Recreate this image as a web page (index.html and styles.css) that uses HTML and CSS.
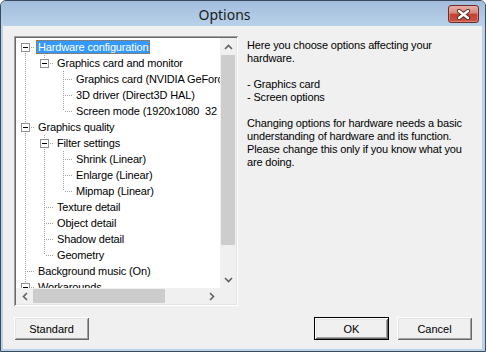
FILE: index.html
```html
<!DOCTYPE html>
<html lang="en">
<head>
  <meta charset="UTF-8" />
  <title>Options</title>
  <link rel="stylesheet" href="styles.css">
</head>
<body>
<div class="window">
  <div class="titlebar">
    <div class="title">Options</div>
    <div class="close">
      <svg width="15" height="11" viewBox="0 0 15 11">
        <path d="M3 2 L12 9 M12 2 L3 9" stroke="#5a2a25" stroke-width="4.2" stroke-linecap="round" fill="none"/>
        <path d="M3 2 L12 9 M12 2 L3 9" stroke="#fff" stroke-width="2.4" stroke-linecap="round" fill="none"/>
      </svg>
    </div>
  </div>

  <div class="client">
    <div class="main">
      <div class="tree">
        <div class="tree-view">
          <div class="row"><span class="ind first"><i class="exp"></i></span><span class="label selected">Hardware configuration</span></div>
          <div class="row"><span class="ind pipe"></span><span class="ind elbow"><i class="exp"></i></span><span class="label">Graphics card and monitor</span></div>
          <div class="row"><span class="ind pipe"></span><span class="ind"></span><span class="ind tee"></span><span class="label">Graphics card (NVIDIA GeForce GTX 1070)</span></div>
          <div class="row"><span class="ind pipe"></span><span class="ind"></span><span class="ind tee"></span><span class="label">3D driver (Direct3D HAL)</span></div>
          <div class="row"><span class="ind pipe"></span><span class="ind"></span><span class="ind elbow"></span><span class="label">Screen mode (1920x1080  32 Bit)</span></div>
          <div class="row"><span class="ind tee"><i class="exp"></i></span><span class="label">Graphics quality</span></div>
          <div class="row"><span class="ind pipe"></span><span class="ind tee"><i class="exp"></i></span><span class="label">Filter settings</span></div>
          <div class="row"><span class="ind pipe"></span><span class="ind pipe"></span><span class="ind tee"></span><span class="label">Shrink (Linear)</span></div>
          <div class="row"><span class="ind pipe"></span><span class="ind pipe"></span><span class="ind tee"></span><span class="label">Enlarge (Linear)</span></div>
          <div class="row"><span class="ind pipe"></span><span class="ind pipe"></span><span class="ind elbow"></span><span class="label">Mipmap (Linear)</span></div>
          <div class="row"><span class="ind pipe"></span><span class="ind tee"></span><span class="label">Texture detail</span></div>
          <div class="row"><span class="ind pipe"></span><span class="ind tee"></span><span class="label">Object detail</span></div>
          <div class="row"><span class="ind pipe"></span><span class="ind tee"></span><span class="label">Shadow detail</span></div>
          <div class="row"><span class="ind pipe"></span><span class="ind elbow"></span><span class="label">Geometry</span></div>
          <div class="row"><span class="ind tee"></span><span class="label">Background music (On)</span></div>
          <div class="row"><span class="ind tee"><i class="exp"></i></span><span class="label">Workarounds</span></div>
          <div class="row"><span class="ind tee"></span><span class="label">Network</span></div>
        </div>
        <div class="vscroll">
          <div class="arrow">
            <svg width="9" height="6" viewBox="0 0 9 6"><path d="M1 5 L4.5 1.5 L8 5" stroke="#606060" stroke-width="1.6" fill="none"/></svg>
          </div>
          <div class="vthumb"></div>
          <div class="track"></div>
          <div class="arrow">
            <svg width="9" height="6" viewBox="0 0 9 6"><path d="M1 1 L4.5 4.5 L8 1" stroke="#606060" stroke-width="1.6" fill="none"/></svg>
          </div>
        </div>
        <div class="hscroll">
          <div class="arrow">
            <svg width="6" height="9" viewBox="0 0 6 9"><path d="M5 1 L1.5 4.5 L5 8" stroke="#606060" stroke-width="1.6" fill="none"/></svg>
          </div>
          <div class="hthumb"></div>
          <div class="track"></div>
          <div class="arrow">
            <svg width="6" height="9" viewBox="0 0 6 9"><path d="M1 1 L4.5 4.5 L1 8" stroke="#606060" stroke-width="1.6" fill="none"/></svg>
          </div>
        </div>
        <div class="corner"></div>
      </div>

      <div class="info">
        <p>Here you choose options affecting your<br>hardware.</p>
        <p>- Graphics card<br>- Screen options</p>
        <p>Changing options for hardware needs a basic<br>understanding of hardware and its function.<br>Please change this only if you know what you<br>are doing.</p>
      </div>
    </div>

    <div class="buttons">
      <button class="btn">Standard</button>
      <span class="spacer"></span>
      <button class="btn default">OK</button>
      <button class="btn">Cancel</button>
    </div>
  </div>
</div>
</body>
</html>
```

FILE: styles.css
```css
* { box-sizing: border-box; }
body {
  margin: 0;
  background: #fff;
  font: 11px "Liberation Sans", Arial, sans-serif;
  letter-spacing: -0.15px;
  color: #000;
}
.window {
  width: 486px;
  height: 352px;
  border: 1px solid #3c4b5b;
  border-radius: 6px 6px 0 0;
  background: #b9d1ea;
  display: flex;
  flex-direction: column;
  overflow: hidden;
}

/* title bar */
.titlebar {
  height: 25px;
  flex: none;
  display: flex;
  align-items: flex-start;
  background: linear-gradient(#a2bddc, #b9d1ea);
}
.title {
  flex: 1;
  text-align: center;
  font: 14px "Noto Sans", sans-serif;
  letter-spacing: 0;
  line-height: 27px;
  color: #1b1b1b;
}
.close {
  width: 31px;
  height: 18px;
  margin: 4px 6px 0 0;
  border: 1px solid #6e2a24;
  border-radius: 3px;
  background: linear-gradient(#e6ada3, #d8877b 45%, #c2402f 50%, #c95444);
  box-shadow: inset 0 0 0 1px #eab3aa80;
  display: flex;
  align-items: center;
  justify-content: center;
}

/* client area */
.client {
  flex: 1;
  margin: 0 3px 2px 2px;
  background: #f0f0f0;
  padding: 10px 10px 9px 11px;
  display: flex;
  flex-direction: column;
}
.main {
  display: flex;
  gap: 9px;
  height: 270px;
}

/* tree view */
.tree {
  width: 224px;
  flex: none;
  padding: 2px;
  background: #fff;
  box-shadow: inset 1px 1px #a0a0a0, inset -1px -1px #fff, inset 2px 2px #696969, inset -2px -2px #e3e3e3;
  display: grid;
  grid-template-columns: 1fr 16px;
  grid-template-rows: 1fr 16px;
}
.tree-view {
  overflow: hidden;
  padding-top: 1px;
}
.row {
  display: flex;
  height: 16px;
  white-space: pre;
}
.ind {
  width: 19px;
  height: 16px;
  flex: none;
  position: relative;
}
.pipe {
  background: repeating-linear-gradient(#a0a0a0 0 1px, transparent 1px 2px) 9px 0 / 1px 16px no-repeat;
}
.tee {
  background:
    repeating-linear-gradient(#a0a0a0 0 1px, transparent 1px 2px) 9px 0 / 1px 16px no-repeat,
    repeating-linear-gradient(90deg, transparent 0 1px, #a0a0a0 1px 2px) 10px 8px / 9px 1px no-repeat;
}
.elbow {
  background:
    repeating-linear-gradient(#a0a0a0 0 1px, transparent 1px 2px) 9px 0 / 1px 8px no-repeat,
    repeating-linear-gradient(90deg, transparent 0 1px, #a0a0a0 1px 2px) 10px 8px / 9px 1px no-repeat;
}
.first {
  background:
    repeating-linear-gradient(#a0a0a0 0 1px, transparent 1px 2px) 9px 8px / 1px 8px no-repeat,
    repeating-linear-gradient(90deg, transparent 0 1px, #a0a0a0 1px 2px) 10px 8px / 9px 1px no-repeat;
}
.exp {
  position: absolute;
  left: 5px;
  top: 4px;
  width: 9px;
  height: 9px;
  border: 1px solid #919191;
  background: #fff;
}
.exp::after {
  content: "";
  position: absolute;
  left: 1px;
  top: 3px;
  width: 5px;
  height: 1px;
  background: #000;
}
.label {
  margin: 1px 0 0 1px;
  height: 14px;
  padding: 0 1px;
  line-height: 12px;
  border: 1px dotted transparent;
}
.label.selected {
  background: #3399ff;
  color: #fff;
  border-color: #cc6600;
}

/* scroll bars */
.vscroll, .hscroll {
  background: #f0f0f0;
  display: flex;
}
.vscroll { flex-direction: column; }
.arrow {
  flex: none;
  width: 16px;
  height: 17px;
  display: flex;
  align-items: center;
  justify-content: center;
}
.hscroll .arrow { width: 17px; height: 16px; }
.vthumb {
  margin: 0 1px;
  height: 190px;
  background: #cdcdcd;
}
.hthumb {
  margin: 1px 0;
  width: 132px;
  background: #cdcdcd;
}
.track { flex: 1; }
.corner { background: #f0f0f0; }

/* description */
.info {
  flex: 1;
  padding-top: 3px;
  line-height: 13px;
  white-space: nowrap;
}
.info p { margin: 0 0 13px; }

/* buttons */
.buttons {
  display: flex;
  gap: 8px;
  margin-top: 11px;
}
.spacer { flex: 1; }
.btn {
  width: 75px;
  height: 23px;
  padding: 0;
  font: inherit;
  color: #000;
  background: #f0f0f0;
  border: none;
  box-shadow: inset 1px 1px #fff, inset -1px -1px #696969, inset 2px 2px #e3e3e3, inset -2px -2px #a0a0a0;
}
.btn.default {
  box-shadow: inset 0 0 0 1px #000, inset 2px 2px #fff, inset -2px -2px #696969, inset 3px 3px #e3e3e3, inset -3px -3px #a0a0a0;
}
```
